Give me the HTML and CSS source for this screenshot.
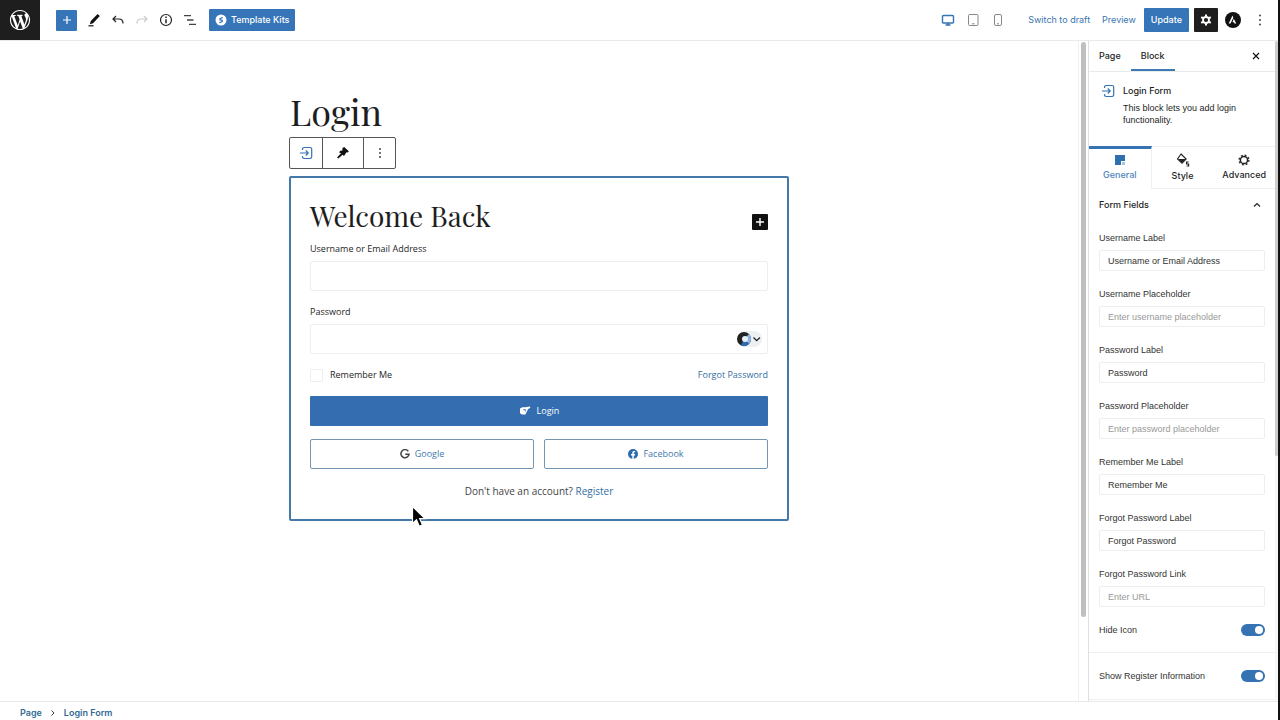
FILE: index.html
```html
<!DOCTYPE html>
<html lang="en">
<head>
<meta charset="utf-8">
<title>Edit Page: Login</title>
<link rel="stylesheet" href="styles.css">
</head>
<body>
<div class="editor">
  <header class="topbar">
    <a class="site-logo" href="#" aria-label="View pages">
      <svg width="22" height="22" viewBox="0 0 24 24" fill="#fff"><path d="M20 10c0-5.51-4.49-10-10-10C4.48 0 0 4.49 0 10c0 5.52 4.48 10 10 10 5.51 0 10-4.48 10-10zM7.78 15.37L4.37 6.22c.55-.02 1.17-.08 1.17-.08.5-.06.44-1.13-.06-1.11 0 0-1.45.11-2.37.11-.18 0-.37 0-.58-.01C4.12 2.69 6.87 1.11 10 1.11c2.33 0 4.45.87 6.05 2.34-.68-.11-1.65.39-1.65 1.58 0 .74.45 1.36.9 2.1.35.61.55 1.36.55 2.46 0 1.49-1.4 5-1.4 5l-3.03-8.37c.54-.02.82-.17.82-.17.5-.05.44-1.25-.06-1.22 0 0-1.44.12-2.38.12-.87 0-2.33-.12-2.33-.12-.5-.03-.56 1.2-.06 1.22l.92.08 1.26 3.41zM17.41 10c.24-.64.74-1.87.43-4.25.7 1.29 1.05 2.71 1.05 4.25 0 3.29-1.73 6.24-4.4 7.78.97-2.59 1.94-5.2 2.92-7.78zM6.1 18.09C3.12 16.65 1.11 13.53 1.11 10c0-1.3.23-2.48.72-3.59C3.25 10.3 4.67 14.2 6.1 18.09zm4.03-6.63l2.58 6.98c-.86.29-1.76.45-2.71.45-.79 0-1.57-.11-2.29-.33.81-2.38 1.62-4.74 2.42-7.1z" transform="translate(1 1) scale(1.1)"/></svg>
    </a>
    <div class="tools">
      <button class="icon-btn inserter" aria-label="Add block"><svg width="12" height="12" viewBox="0 0 12 12" stroke="#fff" stroke-width="1.2"><path d="M6 2v8M2 6h8"/></svg></button>
      <button class="icon-btn" aria-label="Tools"><svg width="14" height="14" viewBox="0 0 14 14"><path d="M10.600 1l2.200 2-6.700 7.200-3.300 1 1-3.200z" fill="#111"/><path d="M1.500 12.800h5" stroke="#111" stroke-width="1.2"/></svg></button>
      <button class="icon-btn" aria-label="Undo"><svg width="14" height="14" viewBox="0 0 14 14" fill="none" stroke="#222" stroke-width="1.2"><path d="M5 3L2 6l3 3M2 6h6c2.600 0 4 1.200 4 4.500"/></svg></button>
      <button class="icon-btn" aria-label="Redo"><svg width="14" height="14" viewBox="0 0 14 14" fill="none" stroke="#ccc" stroke-width="1.2"><path d="M9 3l3 3-3 3M12 6H6c-2.600 0-4 1.200-4 4.500"/></svg></button>
      <button class="icon-btn" aria-label="Details"><svg width="14" height="14" viewBox="0 0 14 14" fill="none" stroke="#222" stroke-width="1.2"><circle cx="7" cy="7" r="5.500"/><path d="M7 6.300v4M7 3.600v1.500" stroke-width="1.500"/></svg></button>
      <button class="icon-btn" aria-label="List view"><svg width="14" height="14" viewBox="0 0 14 14" stroke="#444" stroke-width="1.300"><path d="M1 2.700h7M4 7h6.500M6 11.300h7"/></svg></button>
      <button class="btn-primary kits"><svg width="12" height="12" viewBox="0 0 12 12"><circle cx="6" cy="6" r="5.500" fill="#fff"/><path d="M7.800 3.500L5 4.600v1.300l2.200.3v1.300L4.300 8.700" fill="none" stroke="#3573b3" stroke-width="1.200"/></svg>Template Kits</button>
    </div>
    <div class="actions">
      <div class="devices">
        <button class="icon-btn" aria-label="Desktop"><svg width="14" height="14" viewBox="0 0 14 14" fill="none" stroke="#3573b3"><rect x="1.500" y="2.500" width="11" height="7.500" rx="1" stroke-width="1.400"/><path d="M4.500 12h5M7 10v2" stroke-width="1.600"/></svg></button>
        <button class="icon-btn" aria-label="Tablet"><svg width="14" height="14" viewBox="0 0 14 14" fill="none" stroke="#888"><rect x="2.500" y="1.500" width="9.500" height="11" rx="1"/><path d="M6 10.800h2.500"/></svg></button>
        <button class="icon-btn" aria-label="Mobile"><svg width="14" height="14" viewBox="0 0 14 14" fill="none" stroke="#888"><rect x="3.500" y="1.500" width="7" height="11" rx="1.500"/><path d="M6 10.800h2"/></svg></button>
      </div>
      <button class="btn-link">Switch to draft</button>
      <button class="btn-link">Preview</button>
      <button class="btn-primary update">Update</button>
      <button class="settings" aria-label="Settings"><svg width="14" height="14" viewBox="0 0 14 14"><circle cx="7" cy="7" r="3" fill="none" stroke="#fff" stroke-width="1.800"/><path d="M7 1.500v2M7 10.500v2M2.200 4.200l1.800 1M10 8.800l1.800 1M2.200 9.800l1.800-1M10 5.200l1.800-1" stroke="#fff" stroke-width="2"/></svg></button>
      <button class="icon-btn" aria-label="Astra settings"><svg width="16" height="16" viewBox="0 0 16 16"><circle cx="8" cy="8" r="8" fill="#111"/><path d="M7.500 3.500L3.700 11.500h1.800l2.800-5.700zM8.800 6.700l2.500 4.800H9.500l-.6-1.300H7.500z" fill="#fff"/></svg></button>
      <button class="icon-btn more" aria-label="Options"><svg width="14" height="14" viewBox="0 0 14 14" fill="#333"><circle cx="7" cy="2.500" r=".9"/><circle cx="7" cy="7" r=".9"/><circle cx="7" cy="11.500" r=".9"/></svg></button>
    </div>
  </header>

  <div class="workspace">
    <main class="canvas">
      <div class="page">
        <h1 class="page-title">Login</h1>
        <div class="block-toolbar">
          <button class="tb-btn" aria-label="Login Form"><svg width="14" height="14" viewBox="0 0 14 14" fill="none" stroke="#3573b3" stroke-width="1.200"><path d="M3.500 4V3.200A1.700 1.700 0 0 1 5.200 1.500H11a1.700 1.700 0 0 1 1.700 1.700v7.600A1.700 1.700 0 0 1 11 12.500H5.200a1.700 1.700 0 0 1-1.700-1.700V10M1 7h8M6.800 4.500L9.200 7 6.800 9.500"/></svg></button>
          <button class="tb-btn wide" aria-label="Copy styles"><svg width="14" height="14" viewBox="0 0 14 14" fill="#111"><path d="M6.500 2l1.800-1 .7.700L12.800 5.200l-1 1.300-1.300-.2L8 10 6.600 8.800 2.300 12.600 1 11.500l4-4.300L2.900 6.300 4.800 4.500 6.300 4.800z"/></svg></button>
          <button class="tb-btn" aria-label="Options"><svg width="12" height="12" viewBox="0 0 12 12" fill="#333"><circle cx="6" cy="2" r=".9"/><circle cx="6" cy="6" r=".9"/><circle cx="6" cy="10" r=".9"/></svg></button>
        </div>
        <form class="login">
          <div class="login-head">
            <h2 class="login-title">Welcome Back</h2>
            <button type="button" class="appender" aria-label="Add block"><svg width="12" height="12" viewBox="0 0 12 12" stroke="#fff" stroke-width="1.400"><path d="M6 2v8M2 6h8"/></svg></button>
          </div>
          <label class="login-label" for="user">Username or Email Address</label>
          <input class="login-input" id="user" type="text">
          <label class="login-label second" for="pass">Password</label>
          <div class="pass-wrap">
            <input class="login-input" id="pass" type="password">
            <button type="button" class="pass-tool" aria-label="Password manager"><svg width="26" height="16" viewBox="0 0 26 16"><rect x="1" y="0" width="25" height="16" rx="8" fill="#edf0f2"/><circle cx="8" cy="8" r="7" fill="#222"/><path d="M8 8l5-5a7 7 0 0 1 0 10z" fill="#8bb4e2"/><path d="M8 8l5 5a7 7 0 0 1-8 1.300z" fill="#2e6cb5"/><circle cx="9" cy="8" r="3" fill="#e8eff7"/><path d="M17.500 6.500l3.200 3.200 3.200-3.200" fill="none" stroke="#222" stroke-width="1.300"/></svg></button>
          </div>
          <div class="remember-row">
            <label class="remember"><input class="check" type="checkbox">Remember Me</label>
            <a class="link" href="#">Forgot Password</a>
          </div>
          <button type="button" class="submit"><svg width="12" height="10" viewBox="0 0 12 10"><path d="M1 2.500L3.300 1.200h2.900L10.800.6l.6 1.200L8.800 3.300 8.600 4.600l-.6.3-.2 1.300-.6.300-.7 2.100H3L1 7.300z" fill="#fff"/><path d="M4 3.800l2.400-.4M6.300 3.300v2.400" fill="none" stroke="#3573b3" stroke-width=".8"/></svg>Login</button>
          <div class="socials">
            <button type="button" class="social"><svg width="10" height="10" viewBox="0 0 10 10" fill="none" stroke="#444" stroke-width="1.500"><path d="M8.300 2.200A4.100 4.100 0 1 0 9.100 5.200H5.300"/></svg>Google</button>
            <button type="button" class="social"><svg width="10" height="10" viewBox="0 0 10 10"><circle cx="5" cy="5" r="5" fill="#2b6bb0"/><path d="M4.300 10V6.400H3V5h1.300V3.900C4.300 2.500 5.100 1.900 6.200 1.900l1 .1v1.200h-.6c-.6 0-.8.400-.8.800v1h1.400L7 6.400H5.800V10z" fill="#fff"/></svg>Facebook</button>
          </div>
          <p class="register">Don't have an account? <a class="link" href="#">Register</a></p>
          <svg class="cursor" width="16" height="24" viewBox="0 0 16 24"><path d="M1.500 1.500v17l4-3.700 2.800 6.500 3.200-1.400-2.800-6.200h5.500z" fill="#000" stroke="#fff" stroke-width="1.200"/></svg>
        </form>
      </div>
    </main>
    <div class="canvas-scroll"><div class="canvas-thumb"></div></div>

    <aside class="sidebar">
      <div class="sidebar-body">
        <nav class="side-tabs">
          <button class="side-tab">Page</button>
          <button class="side-tab active">Block</button>
          <button class="close" aria-label="Close settings"><svg width="8" height="8" viewBox="0 0 8 8" stroke="#111" stroke-width="1.200"><path d="M1 1l6 6M7 1L1 7"/></svg></button>
        </nav>
        <section class="block-card">
          <svg width="14" height="14" viewBox="0 0 14 14" fill="none" stroke="#3573b3" stroke-width="1.200"><path d="M3.500 4V3.200A1.700 1.700 0 0 1 5.200 1.500H11a1.700 1.700 0 0 1 1.700 1.700v7.600A1.700 1.700 0 0 1 11 12.500H5.200a1.700 1.700 0 0 1-1.700-1.700V10M1 7h8M6.800 4.500L9.200 7 6.800 9.500"/></svg>
          <div>
            <h2 class="card-title">Login Form</h2>
            <p class="card-text">This block lets you add login functionality.</p>
          </div>
        </section>
        <nav class="modes">
          <button class="mode active"><svg width="12" height="12" viewBox="0 0 12 12"><path d="M1 1h10v6H7v4H1z" fill="#2f6eaf"/><path d="M8 8h3v3H8z" fill="#a9c5e2"/></svg>General</button>
          <button class="mode"><svg width="14" height="14" viewBox="0 0 14 14"><path d="M5 1l5.200 5L6 10.300 1.500 6z" fill="none" stroke="#222" stroke-width="1.100"/><path d="M2 6h8L6 10z" fill="#222"/><path d="M12.600 9h-2v2h2v2h-2" fill="none" stroke="#222" stroke-width="1.200"/></svg>Style</button>
          <button class="mode"><svg width="12" height="12" viewBox="0 0 12 12" fill="none" stroke="#222"><circle cx="6" cy="6" r="3.600" stroke-width="1.500"/><circle cx="6" cy="6" r="4.900" stroke-width="1.300" stroke-dasharray="1.900 1.950"/></svg>Advanced</button>
        </nav>
        <button class="panel-head">Form Fields<svg width="8" height="6" viewBox="0 0 8 6" fill="none" stroke="#222" stroke-width="1.200"><path d="M1 4.500l3-3 3 3"/></svg></button>
        <div class="fields">
          <label class="field">Username Label<input type="text" value="Username or Email Address"></label>
          <label class="field">Username Placeholder<input type="text" placeholder="Enter username placeholder"></label>
          <label class="field">Password Label<input type="text" value="Password"></label>
          <label class="field">Password Placeholder<input type="text" placeholder="Enter password placeholder"></label>
          <label class="field">Remember Me Label<input type="text" value="Remember Me"></label>
          <label class="field">Forgot Password Label<input type="text" value="Forgot Password"></label>
          <label class="field">Forgot Password Link<input type="text" placeholder="Enter URL"></label>
        </div>
        <label class="toggle-row">Hide Icon<input class="toggle" type="checkbox" checked></label>
        <label class="toggle-row last">Show Register Information<input class="toggle" type="checkbox" checked></label>
      </div>
      <div class="side-scroll"><div class="side-thumb"></div></div>
    </aside>
  </div>

  <footer class="crumbs">
    <a href="#">Page</a>
    <svg width="6" height="8" viewBox="0 0 6 8" fill="none" stroke="#444"><path d="M1.500 1.500L4 4 1.500 6.500"/></svg>
    <a href="#">Login Form</a>
  </footer>
</div>
</body>
</html>
```
FILE: styles.css
```css
* { box-sizing: border-box; }
body { margin: 0; background: #fff; color: #1e1e1e; font: 9px/12px Inter, "Liberation Sans", sans-serif; }
button { margin: 0; padding: 0; border: 0; background: none; color: inherit; font: inherit; cursor: pointer; }
input { font: inherit; color: inherit; }
h1, h2, p { margin: 0; font-weight: 400; }
a { text-decoration: none; }
svg { display: block; flex: none; }

.editor { display: flex; flex-direction: column; height: 100vh; border-right: 2px solid #111; }

/* Top bar */
.topbar { display: flex; align-items: center; flex: none; height: 41px; border-bottom: 1px solid #e8ebed; }
.site-logo { display: flex; align-items: center; justify-content: center; align-self: stretch; width: 40px; background: #1e1e1e; }
.tools { display: flex; align-items: center; gap: 4px; margin-left: 16px; }
.icon-btn { display: flex; align-items: center; justify-content: center; width: 20px; height: 20px; }
.inserter { width: 21px; height: 21px; margin-right: 3px; border-radius: 1px; background: #3575b8; }
.btn-primary { border-radius: 1px; background: #3575b8; color: #fff; font-weight: 500; }
.kits { display: flex; align-items: center; gap: 4px; height: 22px; margin-left: 5px; padding: 0 6px; }
.actions { display: flex; align-items: center; margin-left: auto; padding-right: 8px; }
.devices { display: flex; gap: 5px; margin-right: 20px; }
.btn-link { margin-right: 12px; color: #3b76ad; }
.btn-link + .btn-link { margin-right: 8px; }
.update { height: 24px; padding: 0 7px; }
.settings { display: flex; align-items: center; justify-content: center; width: 24px; height: 24px; margin: 0 5px; border-radius: 1px; background: #1e1e1e; }
.more { margin-left: 7px; }

/* Workspace */
.workspace { display: flex; flex: 1; min-height: 0; }
.canvas { flex: 1; min-width: 0; padding: 48px 24px 0; }
.page { max-width: 500px; margin: 0 auto; }
.page-title { padding: 0 0 4px 1px; font: 36px/44px "Playfair Display", "Liberation Serif", serif; }
.block-toolbar { display: flex; width: max-content; height: 32px; margin-bottom: 7px; border: 1px solid #555; border-radius: 2px; }
.tb-btn { display: flex; align-items: center; justify-content: center; width: 32px; }
.tb-btn + .tb-btn { border-left: 1px solid #555; }
.tb-btn.wide { width: 41px; }
.canvas-scroll { width: 10px; padding: 1px 2px; border-left: 1px solid #eef0f1; }
.canvas-thumb { width: 5px; height: 575px; border-radius: 3px; background: #bfbfbf; }

/* Login form block */
.login { position: relative; display: flex; flex-direction: column; padding: 20px 19px; border: 2px solid #4478a8; border-radius: 2px; font: 500 9px/16px "Open Sans", sans-serif; }
.login-head { display: flex; align-items: flex-start; justify-content: space-between; height: 43px; }
.login-title { font: 28px/36px "Playfair Display", "Liberation Serif", serif; }
.appender { display: flex; align-items: center; justify-content: center; width: 16px; height: 16px; margin-top: 16px; border-radius: 1px; background: #111; }
.login-label { margin-bottom: 4px; }
.login-label.second { margin-top: 13px; }
.login-input { width: 100%; height: 30px; border: 1px solid #eceeef; border-radius: 2px; background: #fff; }
.pass-wrap { position: relative; display: flex; }
.pass-tool { position: absolute; right: 6px; top: 7px; }
.remember-row { display: flex; justify-content: space-between; align-items: center; margin: 13px 0; }
.remember { display: flex; align-items: center; gap: 7px; }
.check { appearance: none; width: 13px; height: 13px; margin: 0; border: 1px solid #eceeef; border-radius: 1px; }
.link { color: #356da3; }
.submit, .social { display: flex; align-items: center; justify-content: center; height: 30px; }
.submit { gap: 6px; background: #346eb0; color: #fff; border-radius: 1px; }
.socials { display: flex; gap: 10px; margin: 13px 0 14px; }
.social { flex: 1; gap: 5px; border: 1px solid #7596b3; border-radius: 2px; color: #4178ad; }
.register { color: #444; font-size: 10px; font-weight: 400; text-align: center; }
.cursor { position: absolute; left: 120px; top: 327px; }

/* Sidebar */
.sidebar { display: flex; width: 190px; border-left: 1px solid #dde1e3; }
.sidebar-body { flex: 1; min-width: 0; }
.side-scroll { width: 3px; background: #f6f7f7; }
.side-thumb { height: 415px; border-radius: 2px; background: #cdcdcd; }
.side-tabs { display: flex; height: 31px; border-bottom: 1px solid #e8ebed; }
.side-tab { padding: 0 10px; font-weight: 500; }
.side-tab.active { border-bottom: 2px solid #3f79b2; padding-top: 2px; }
.close { margin-left: auto; padding: 0 15px; }
.block-card { display: flex; gap: 8px; padding: 12px 12px 20px; }
.card-title { font-size: 9px; line-height: 14px; font-weight: 500; margin-bottom: 4px; }
.card-text, .fields, .toggle-row { font-family: "Liberation Sans", Arial, sans-serif; }
.modes { display: flex; height: 43px; }
.mode { display: flex; flex: 1; flex-direction: column; align-items: center; justify-content: center; gap: 3px; border-top: 1px solid #eef0f1; border-bottom: 1px solid #eef0f1; font-weight: 500; }
.mode.active { border-top: 3px solid #3573b3; border-bottom: 0; border-right: 1px solid #eef0f1; padding-bottom: 3px; color: #4c85bd; }
.panel-head { display: flex; align-items: center; justify-content: space-between; width: 100%; height: 32px; padding: 0 14px 0 10px; font-weight: 500; }
.fields { display: flex; flex-direction: column; gap: 17px; padding: 11px 10px 0; }
.field { display: flex; flex-direction: column; gap: 6px; color: #333; }
.field input { width: 100%; height: 21px; padding: 0 8px; border: 1px solid #eceeef; border-radius: 2px; background: #fff; }
.field input::placeholder { color: #999; }
.toggle-row { display: flex; align-items: center; justify-content: space-between; height: 46px; padding: 0 10px; border-bottom: 1px solid #edeff0; color: #333; }
.toggle-row.last { height: 47px; }
.toggle { position: relative; appearance: none; width: 24px; height: 12px; margin: 0; border-radius: 6px; background: #3573b3; }
.toggle::after { content: ""; position: absolute; top: 2px; right: 2px; width: 8px; height: 8px; border-radius: 50%; background: #fff; }

/* Breadcrumbs */
.crumbs { display: flex; align-items: center; flex: none; gap: 8px; height: 19px; padding: 4px 20px 0; border-top: 1px solid #e8ebed; font-weight: 600; }
.crumbs a { color: #356a96; }
```
